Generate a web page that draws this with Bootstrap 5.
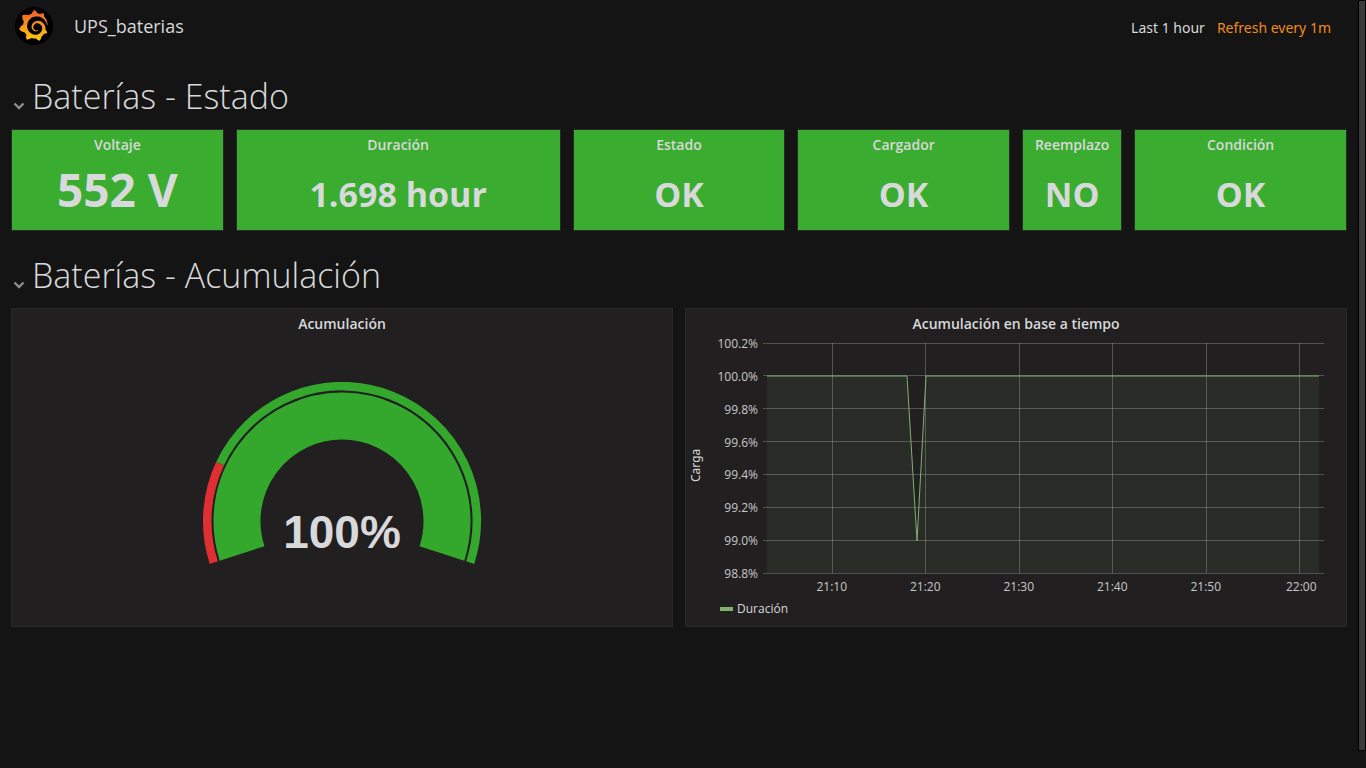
<!DOCTYPE html>
<html lang="es" data-bs-theme="dark">
<head>
<meta charset="utf-8">
<meta name="viewport" content="width=device-width, initial-scale=1">
<title>UPS_baterias</title>
<link href="https://cdn.jsdelivr.net/npm/bootstrap@5.3.0/dist/css/bootstrap.min.css" rel="stylesheet">
<style>
  body { background: #141414; color: #d8d9da; font-family: "Open Sans", "Noto Sans", sans-serif; font-size: 14px; line-height: 20px; }
  .dashboard { padding: 0 5px; }
  .topbar { height: 52px; padding: 0 22px 0 10px; }
  .topbar h1 { font-size: 18px; line-height: 24px; font-weight: 400; margin-left: 21px; color: #d8d9da; }
  .time-controls { padding-top: 3px; font-family: "Noto Sans", "Open Sans", sans-serif; }
  .btn-bar { background: none; border: 0; padding: 0; color: #d8d9da; }
  .refresh { color: #f28c1e; margin-left: 12px; }
  .section-title { height: 77px; padding: 20px 0 0 8px; }
  .section-title h2 { font-size: 34px; line-height: 48px; font-weight: 300; margin-bottom: 0; color: #d8d9da; }
  .fold { width: 19px; color: #8e8e8e; text-align: left; padding-top: 8px; line-height: 12px; }
  .panel-row { --bs-gutter-x: 12px; }
  .panel { background: #211f20; border: 1px solid #292929; padding-top: 5px; }
  .panel h3 { font-size: 14px; line-height: 20px; font-weight: 600; text-align: center; margin: 0; color: #d8d9da; }
  .stat { background: #3aac2f; height: 102px; }
  .stat-value { font-weight: 700; font-size: 34px; line-height: 40px; padding-top: 19px; text-align: center; white-space: nowrap; }
  .stat-value.big { font-size: 46px; padding-top: 14px; }
  .tall { height: 319px; }
  .gauge-text { font: 700 46px "Liberation Sans", Arial, sans-serif; fill: #d8d9da; }
  .chart { font-size: 12px; line-height: 16px; color: #c8c8c8; padding: 9px 22px 0 2px; }
  .axis-name { writing-mode: vertical-rl; transform: rotate(180deg); width: 16px; padding-top: 8px; color: #d8d9da; font-family: "Noto Sans", "Open Sans", sans-serif; }
  .y-axis { width: 54px; height: 246px; margin: -7px 5px 0 0; }
  .plot { height: 231px; }
  .x-axis { margin: 5px -22px 0 22px; }
  .legend { margin: 6px 0 0 32px; color: #d8d9da; }
  .swatch { width: 13px; height: 4px; background: #7eb26d; margin-right: 4px; }
  .scroll-track { width: 8px; height: 100vh; background: #141414; }
  .scroll-thumb { height: calc(100% - 17px); background: #3a3a3a; border: 1px solid #000; }
</style>
</head>
<body>
<div class="d-flex">
<div class="dashboard flex-fill">
  <header class="topbar d-flex align-items-center">
    <svg width="38" height="38" viewBox="0 0 38 38" aria-hidden="true">
      <defs><linearGradient id="sun" x1="0" y1="0" x2="0" y2="1"><stop offset="0" stop-color="#f15a29"/><stop offset="1" stop-color="#fccc0b"/></linearGradient></defs>
      <circle cx="19" cy="19" r="19" fill="#000"/>
      <path transform="translate(3 3) scale(1.28)" fill="url(#sun)" d="M23.02 10.59a8.578 8.578 0 0 0-.862-3.034 8.911 8.911 0 0 0-1.789-2.445c.337-1.342-.413-2.505-.413-2.505-1.292-.08-2.113.4-2.416.62-.052-.02-.102-.044-.154-.064-.22-.089-.446-.172-.677-.247-.231-.073-.47-.14-.711-.197a9.867 9.867 0 0 0-.875-.161C14.557.753 12.94 0 12.94 0c-1.804 1.145-2.147 2.744-2.147 2.744l-.018.093c-.098.029-.2.057-.298.088-.138.042-.275.094-.413.143-.138.055-.275.107-.41.166a8.869 8.869 0 0 0-1.557.87l-.063-.029c-2.497-.955-4.716.195-4.716.195-.203 2.658.996 4.33 1.235 4.636a11.608 11.608 0 0 0-.607 2.635C1.636 12.677.953 15.014.953 15.014c1.926 2.214 4.171 2.351 4.171 2.351.003-.002.006-.002.006-.005.285.509.615.994.986 1.446.156.19.32.371.488.548-.704 2.009.099 3.68.099 3.68 2.144.08 3.553-.937 3.849-1.173a9.784 9.784 0 0 0 3.164.501h.08l.055-.003.107-.002.103-.005.003.002c1.01 1.44 2.788 1.646 2.788 1.646 1.264-1.332 1.337-2.653 1.337-2.94v-.058c0-.02-.003-.039-.003-.06.265-.187.52-.387.758-.6a7.875 7.875 0 0 0 1.415-1.7c1.43.083 2.437-.885 2.437-.885-.236-1.49-1.085-2.216-1.264-2.354l-.018-.013-.016-.013a.217.217 0 0 1-.031-.02c.008-.092.016-.18.02-.27.011-.162.016-.323.016-.48v-.253l-.005-.098-.008-.135a1.891 1.891 0 0 0-.01-.13c-.003-.042-.008-.083-.013-.125l-.016-.124-.018-.122a6.215 6.215 0 0 0-2.032-3.73 6.015 6.015 0 0 0-3.222-1.46 6.292 6.292 0 0 0-.85-.048l-.107.002h-.063l-.044.003-.104.008a4.777 4.777 0 0 0-3.335 1.695c-.332.4-.592.84-.768 1.297a4.594 4.594 0 0 0-.312 1.817l.003.091c.005.055.007.11.013.164a3.615 3.615 0 0 0 .698 1.82 3.53 3.53 0 0 0 1.827 1.282c.33.098.66.14.971.137.039 0 .078 0 .114-.002l.063-.003c.02 0 .041-.003.062-.003.034-.002.065-.007.099-.01.007 0 .018-.003.028-.003l.031-.005.06-.008a1.18 1.18 0 0 0 .112-.02c.036-.008.072-.013.109-.024a2.634 2.634 0 0 0 .914-.415c.028-.02.056-.041.085-.065a.248.248 0 0 0 .039-.35.244.244 0 0 0-.309-.06l-.078.042c-.09.044-.184.083-.283.116a2.476 2.476 0 0 1-.475.096c-.028.003-.054.006-.083.006l-.083.002c-.026 0-.054 0-.08-.002l-.102-.006h-.012l-.024.006c-.016-.003-.031-.003-.044-.006-.031-.002-.06-.007-.091-.01a2.59 2.59 0 0 1-.724-.213 2.557 2.557 0 0 1-.667-.438 2.52 2.52 0 0 1-.805-1.475 2.306 2.306 0 0 1-.029-.444l.006-.122v-.023l.002-.031c.003-.021.003-.04.005-.06a3.163 3.163 0 0 1 1.352-2.29 3.12 3.12 0 0 1 .937-.43 2.946 2.946 0 0 1 .776-.101h.06l.07.002.045.003h.026l.07.005a4.041 4.041 0 0 1 1.635.49 3.94 3.94 0 0 1 1.602 1.662 3.77 3.77 0 0 1 .397 1.414l.005.076.003.075c.002.026.002.05.002.075 0 .024.003.052 0 .07v.065l-.002.073-.008.174a6.195 6.195 0 0 1-.08.639 5.1 5.1 0 0 1-.267.927 5.31 5.31 0 0 1-.624 1.13 5.052 5.052 0 0 1-3.237 2.014 4.82 4.82 0 0 1-.649.066l-.039.003h-.287a6.607 6.607 0 0 1-1.716-.265 6.776 6.776 0 0 1-3.4-2.274 6.75 6.75 0 0 1-.746-1.15 6.616 6.616 0 0 1-.714-2.596l-.005-.083-.002-.02v-.056l-.003-.073v-.096l-.003-.104v-.07l.003-.163c.008-.22.026-.45.054-.678a8.707 8.707 0 0 1 .28-1.355c.128-.444.286-.872.473-1.277a7.04 7.04 0 0 1 1.456-2.1 5.925 5.925 0 0 1 .953-.763c.169-.111.343-.213.524-.306.089-.05.182-.091.273-.135.047-.02.093-.042.138-.062a7.177 7.177 0 0 1 .714-.267l.145-.045c.049-.015.098-.026.148-.041.098-.029.197-.052.296-.076.049-.013.1-.02.15-.033l.15-.032.151-.028.076-.013.075-.01.153-.024c.057-.01.114-.013.171-.023l.169-.021c.036-.003.073-.008.106-.01l.073-.008.036-.003.042-.002c.057-.003.114-.008.171-.01l.086-.006h.023l.037-.003.145-.007a7.999 7.999 0 0 1 1.708.125 7.917 7.917 0 0 1 2.048.68 8.253 8.253 0 0 1 1.672 1.09l.09.077.089.078c.06.052.114.107.171.159.057.052.112.106.166.16.052.055.107.107.159.164a8.671 8.671 0 0 1 1.41 1.978c.012.026.028.052.04.078l.04.078.075.156c.023.051.05.1.07.153l.065.15a8.848 8.848 0 0 1 .45 1.34.19.19 0 0 0 .201.142.186.186 0 0 0 .172-.184c.01-.246.002-.532-.024-.856z"/>
    </svg>
    <h1 class="mb-0">UPS_baterias</h1>
    <div class="time-controls d-flex ms-auto">
      <button type="button" class="btn-bar">Last 1 hour</button>
      <button type="button" class="btn-bar refresh">Refresh every 1m</button>
    </div>
  </header>

  <main>
    <section>
      <div class="section-title d-flex align-items-start">
        <button type="button" class="btn-bar fold align-self-center" aria-label="Contraer Baterías - Estado">
          <svg width="12" height="8" viewBox="0 0 12 8" fill="none" stroke="currentColor" stroke-width="2.400"><path d="M1.500 1.500L6 6l4.500-4.500"/></svg>
        </button>
        <h2>Baterías - Estado</h2>
      </div>
      <div class="row panel-row mx-0">
        <div class="col-2"><div class="panel stat"><h3>Voltaje</h3><div class="stat-value big">552 V</div></div></div>
        <div class="col-3"><div class="panel stat"><h3>Duración</h3><div class="stat-value">1.698 hour</div></div></div>
        <div class="col-2"><div class="panel stat"><h3>Estado</h3><div class="stat-value">OK</div></div></div>
        <div class="col-2"><div class="panel stat"><h3>Cargador</h3><div class="stat-value">OK</div></div></div>
        <div class="col-1"><div class="panel stat"><h3>Reemplazo</h3><div class="stat-value">NO</div></div></div>
        <div class="col-2"><div class="panel stat"><h3>Condición</h3><div class="stat-value">OK</div></div></div>
      </div>
    </section>

    <section>
      <div class="section-title d-flex align-items-start">
        <button type="button" class="btn-bar fold align-self-center" aria-label="Contraer Baterías - Acumulación">
          <svg width="12" height="8" viewBox="0 0 12 8" fill="none" stroke="currentColor" stroke-width="2.400"><path d="M1.500 1.500L6 6l4.500-4.500"/></svg>
        </button>
        <h2>Baterías - Acumulación</h2>
      </div>
      <div class="row panel-row mx-0">
        <div class="col-6">
          <div class="panel tall">
            <h3>Acumulación</h3>
            <svg class="d-block mx-auto mt-5" width="280" height="186" viewBox="-140 -139 280 186">
              <g fill="none">
                <path d="M-128.200 41.600A134.750 134.750 0 0 1-121.900-57.400" stroke="#e02f33" stroke-width="8.500"/>
                <path d="M-121.900-57.400A134.750 134.750 0 0 1 128.200 41.600" stroke="#33a82d" stroke-width="8.500"/>
                <path d="M-99.900 32.400A105 105 0 1 1 99.900 32.400" stroke="#33a82d" stroke-width="47"/>
              </g>
              <text class="gauge-text" x="0" y="27" text-anchor="middle">100%</text>
            </svg>
          </div>
        </div>
        <div class="col-6">
          <div class="panel tall">
            <h3>Acumulación en base a tiempo</h3>
            <div class="chart">
              <div class="d-flex">
                <div class="axis-name d-flex justify-content-center">Carga</div>
                <div class="y-axis d-flex flex-column justify-content-between text-end">
                  <span>100.2%</span><span>100.0%</span><span>99.8%</span><span>99.6%</span><span>99.4%</span><span>99.2%</span><span>99.0%</span><span>98.8%</span>
                </div>
                <div class="flex-fill">
                  <svg class="plot d-block w-100" viewBox="0 0 561 231" preserveAspectRatio="none">
                    <path d="M4 33H144L154 198L163 33H556V230H4Z" fill="#7eb26d" fill-opacity=".1"/>
                    <g stroke="#c8c8c8" stroke-opacity=".3" fill="none" shape-rendering="crispEdges">
                      <path vector-effect="non-scaling-stroke" d="M0 .5H561M0 32.500H561M0 65.500H561M0 98.500H561M0 131.500H561M0 164.500H561M0 197.500H561M0 230.500H561"/>
                      <path vector-effect="non-scaling-stroke" d="M69.500 0V230M162.500 0V230M256.500 0V230M349.500 0V230M443.500 0V230M536.500 0V230"/>
                    </g>
                    <path vector-effect="non-scaling-stroke" d="M4 33H144L154 198L163 33H556" fill="none" stroke="#7eb26d" stroke-linejoin="bevel"/>
                  </svg>
                  <div class="x-axis d-flex text-center">
                    <span class="col-2">21:10</span><span class="col-2">21:20</span><span class="col-2">21:30</span><span class="col-2">21:40</span><span class="col-2">21:50</span><span class="col-2 ps-1">22:00</span>
                  </div>
                </div>
              </div>
              <div class="legend d-flex align-items-center"><span class="swatch"></span>Duración</div>
            </div>
          </div>
        </div>
      </div>
    </section>
  </main>
</div>
<div class="scroll-track" aria-hidden="true"><div class="scroll-thumb"></div></div>
</div>
<script src="https://cdn.jsdelivr.net/npm/bootstrap@5.3.0/dist/js/bootstrap.bundle.min.js"></script>
</body>
</html>
